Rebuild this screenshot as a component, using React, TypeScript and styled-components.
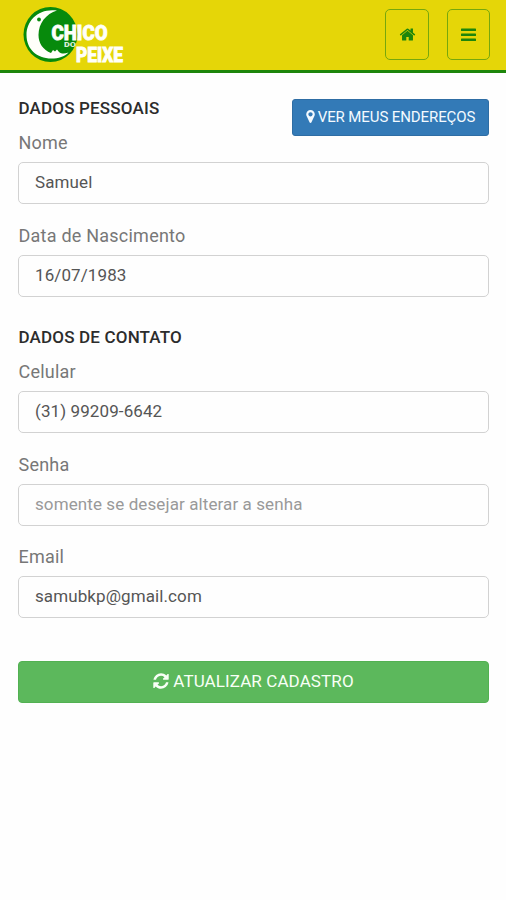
import React from 'react';
import styled, { createGlobalStyle } from 'styled-components';

const GlobalStyle = createGlobalStyle`
  *, *::before, *::after { box-sizing: border-box; }
  body { margin: 0; background: #fefefe; font-family: Roboto, "Liberation Sans", sans-serif; }
`;

const Header = styled.header`
  display: flex;
  align-items: flex-start;
  justify-content: space-between;
  height: 72.5px;
  padding: 0 16px 0 18px;
  background: #e5d608;
  border-bottom: 3px solid #1d860b;
`;

const Logo = styled.svg`
  display: block;
  width: 112px;
  height: 68px;
`;

const LogoText = styled.text`
  font-family: Roboto, sans-serif;
  font-weight: 900;
  fill: #fffffa;
  stroke: #fffffa;
`;

const HeaderActions = styled.nav`
  display: flex;
  gap: 18px;
  padding-top: 9px;
`;

const IconButton = styled.button<{ $width: number }>`
  display: flex;
  align-items: center;
  justify-content: center;
  width: ${(p) => p.$width}px;
  height: 51px;
  padding: 0;
  color: #1d860b;
  background: transparent;
  border: 1.5px solid #76a80c;
  border-radius: 5px;
`;

const Glyph = styled.svg<{ $w: number; $h: number }>`
  display: block;
  flex: none;
  width: ${(p) => p.$w}px;
  height: ${(p) => p.$h}px;
  fill: currentColor;
`;

const Form = styled.form`
  display: flex;
  flex-direction: column;
  padding: 26px 17px 0 18px;
`;

const SectionHead = styled.div`
  display: flex;
  justify-content: space-between;
  align-items: flex-start;
  height: 34px;
`;

const SectionTitle = styled.h2`
  margin: 0;
  padding-left: 0.5px;
  font-size: 17px;
  font-weight: 500;
  line-height: 19px;
  letter-spacing: 0.17px;
  color: #2c2c2c;
`;

const AddressButton = styled.button`
  display: flex;
  align-items: center;
  justify-content: center;
  gap: 3px;
  width: 197px;
  height: 37px;
  flex: none;
  padding: 0 0 1px;
  font: 400 15px/20px Roboto, sans-serif;
  letter-spacing: -0.1px;
  color: #f4faff;
  background: #337ab7;
  border: 1px solid #2e6da4;
  border-radius: 3px;
`;

const Field = styled.div<{ $gap?: number }>`
  display: flex;
  flex-direction: column;
  margin-bottom: ${(p) => p.$gap ?? 21}px;
`;

const Label = styled.label`
  height: 29px;
  padding-left: 0.5px;
  font-size: 18px;
  line-height: 20px;
  letter-spacing: 0.23px;
  color: #777;
`;

const Input = styled.input`
  height: 42px;
  width: 100%;
  padding: 0 16px 1px;
  font: 400 17px/24px Roboto, sans-serif;
  letter-spacing: 0.1px;
  color: #555;
  background: #fefefe;
  border: 1.5px solid #d2d2d2;
  border-radius: 5px;
  outline: none;
  &::placeholder { color: #999; opacity: 1; }
`;

const SubmitButton = styled.button`
  display: flex;
  align-items: center;
  justify-content: center;
  gap: 4px;
  height: 42px;
  padding: 0 0 1px;
  font: 400 17px/24px Roboto, sans-serif;
  letter-spacing: 0.1px;
  color: #f8fff6;
  background: #5cb85c;
  border: 1px solid #52b152;
  border-radius: 4px;
`;

const BrandLogo = () => (
  <Logo viewBox="18 0 112 68" role="img" aria-label="Chico do Peixe">
    <ellipse cx="50.5" cy="34.5" rx="27" ry="27.5" fill="#078a0c" />
    <path
      fill="#fffffa"
      d="M57 10.5C39 8 26.5 20 26.5 35c0 14 10 23.5 25 23.5 7 0 13-2 17-6-4 1.5-7 1.500-9.500-.5L57 49.500l-2 2-2-1.500-2 3c-8-3-12.500-10-12.500-18C38.500 23 46 14 57 10.500Z"
    />
    <circle cx="39" cy="19.500" r="1.900" fill="#078a0c" />
    <LogoText x="51.500" y="39.500" fontSize="19.500" strokeWidth="0.800" textLength="56" lengthAdjust="spacingAndGlyphs">CHICO</LogoText>
    <LogoText x="64" y="46.500" fontSize="7.500" strokeWidth="0" textLength="12" lengthAdjust="spacingAndGlyphs" opacity="0.85">DO</LogoText>
    <LogoText x="76" y="61.500" fontSize="19.500" strokeWidth="0.800" textLength="47" lengthAdjust="spacingAndGlyphs">PEIXE</LogoText>
  </Logo>
);

const HomeIcon = () => (
  <Glyph $w={17} $h={17} viewBox="0 0 1792 1792">
    <path d="M1472 992v480q0 26-19 45t-45 19h-384v-384h-256v384h-384q-26 0-45-19t-19-45v-480q0-1 .5-3t.5-3l575-474 575 474q1 2 1 6zm223-69l-62 74q-8 9-21 11h-3q-13 0-21-7l-692-577-692 577q-12 8-24 7-13-2-21-11l-62-74q-8-10-7-23.5t11-21.5l719-599q32-26 76-26t76 26l244 204v-195q0-14 9-23t23-9h192q14 0 23 9t9 23v408l219 182q10 8 11 21.5t-7 23.5z" />
  </Glyph>
);

const MenuIcon = () => (
  <Glyph $w={15} $h={14} viewBox="0 0 15 14">
    <rect x="0" y="0.5" width="15" height="2.6" rx="0.6" />
    <rect x="0" y="5.5" width="15" height="2.6" rx="0.6" />
    <rect x="0" y="10.5" width="15" height="2.6" rx="0.6" />
  </Glyph>
);

const MarkerIcon = () => (
  <Glyph $w={9} $h={15} viewBox="384 0 1024 1792">
    <path d="M1152 640q0-106-75-181t-181-75-181 75-75 181 75 181 181 75 181-75 75-181zm256 0q0 109-33 179l-364 774q-16 33-47.5 52t-67.5 19-67.5-19-46.5-52l-365-774q-33-70-33-179 0-212 150-362t362-150 362 150 150 362z" />
  </Glyph>
);

const RefreshIcon = () => (
  <Glyph $w={16} $h={18} viewBox="0 0 1536 1792">
    <path d="M1511 1056q0 5-1 7-64 268-268 434.5t-478 166.5q-146 0-282.5-55t-243.5-157l-129 129q-19 19-45 19t-45-19-19-45v-448q0-26 19-45t45-19h448q26 0 45 19t19 45-19 45l-137 137q71 66 161 102t187 36q134 0 250-65t186-179q11-17 53-117 8-23 30-23h192q13 0 22.5 9.5t9.5 22.5zm25-800v448q0 26-19 45t-45 19h-448q-26 0-45-19t-19-45 19-45l138-138q-148-137-349-137-134 0-250 65t-186 179q-11 17-53 117-8 23-30 23h-199q-13 0-22.5-9.5t-9.5-22.5v-7q65-268 270-434.5t480-166.5q146 0 284 55.5t245 156.5l130-129q19-19 45-19t45 19 19 45z" />
  </Glyph>
);

export default function App() {
  return (
    <>
      <GlobalStyle />
      <Header>
        <BrandLogo />
        <HeaderActions>
          <IconButton $width={44} type="button" aria-label="Início"><HomeIcon /></IconButton>
          <IconButton $width={43} type="button" aria-label="Menu"><MenuIcon /></IconButton>
        </HeaderActions>
      </Header>
      <Form>
        <SectionHead>
          <SectionTitle>DADOS PESSOAIS</SectionTitle>
          <AddressButton type="button"><MarkerIcon />VER MEUS ENDEREÇOS</AddressButton>
        </SectionHead>
        <Field $gap={22}>
          <Label htmlFor="nome">Nome</Label>
          <Input id="nome" defaultValue="Samuel" />
        </Field>
        <Field $gap={31}>
          <Label htmlFor="nascimento">Data de Nascimento</Label>
          <Input id="nascimento" defaultValue="16/07/1983" />
        </Field>
        <SectionHead>
          <SectionTitle>DADOS DE CONTATO</SectionTitle>
        </SectionHead>
        <Field $gap={22}>
          <Label htmlFor="celular">Celular</Label>
          <Input id="celular" defaultValue="(31) 99209-6642" />
        </Field>
        <Field>
          <Label htmlFor="senha">Senha</Label>
          <Input id="senha" type="password" placeholder="somente se desejar alterar a senha" />
        </Field>
        <Field $gap={43}>
          <Label htmlFor="email">Email</Label>
          <Input id="email" defaultValue="samubkp@gmail.com" />
        </Field>
        <SubmitButton type="button"><RefreshIcon />ATUALIZAR CADASTRO</SubmitButton>
      </Form>
    </>
  );
}
